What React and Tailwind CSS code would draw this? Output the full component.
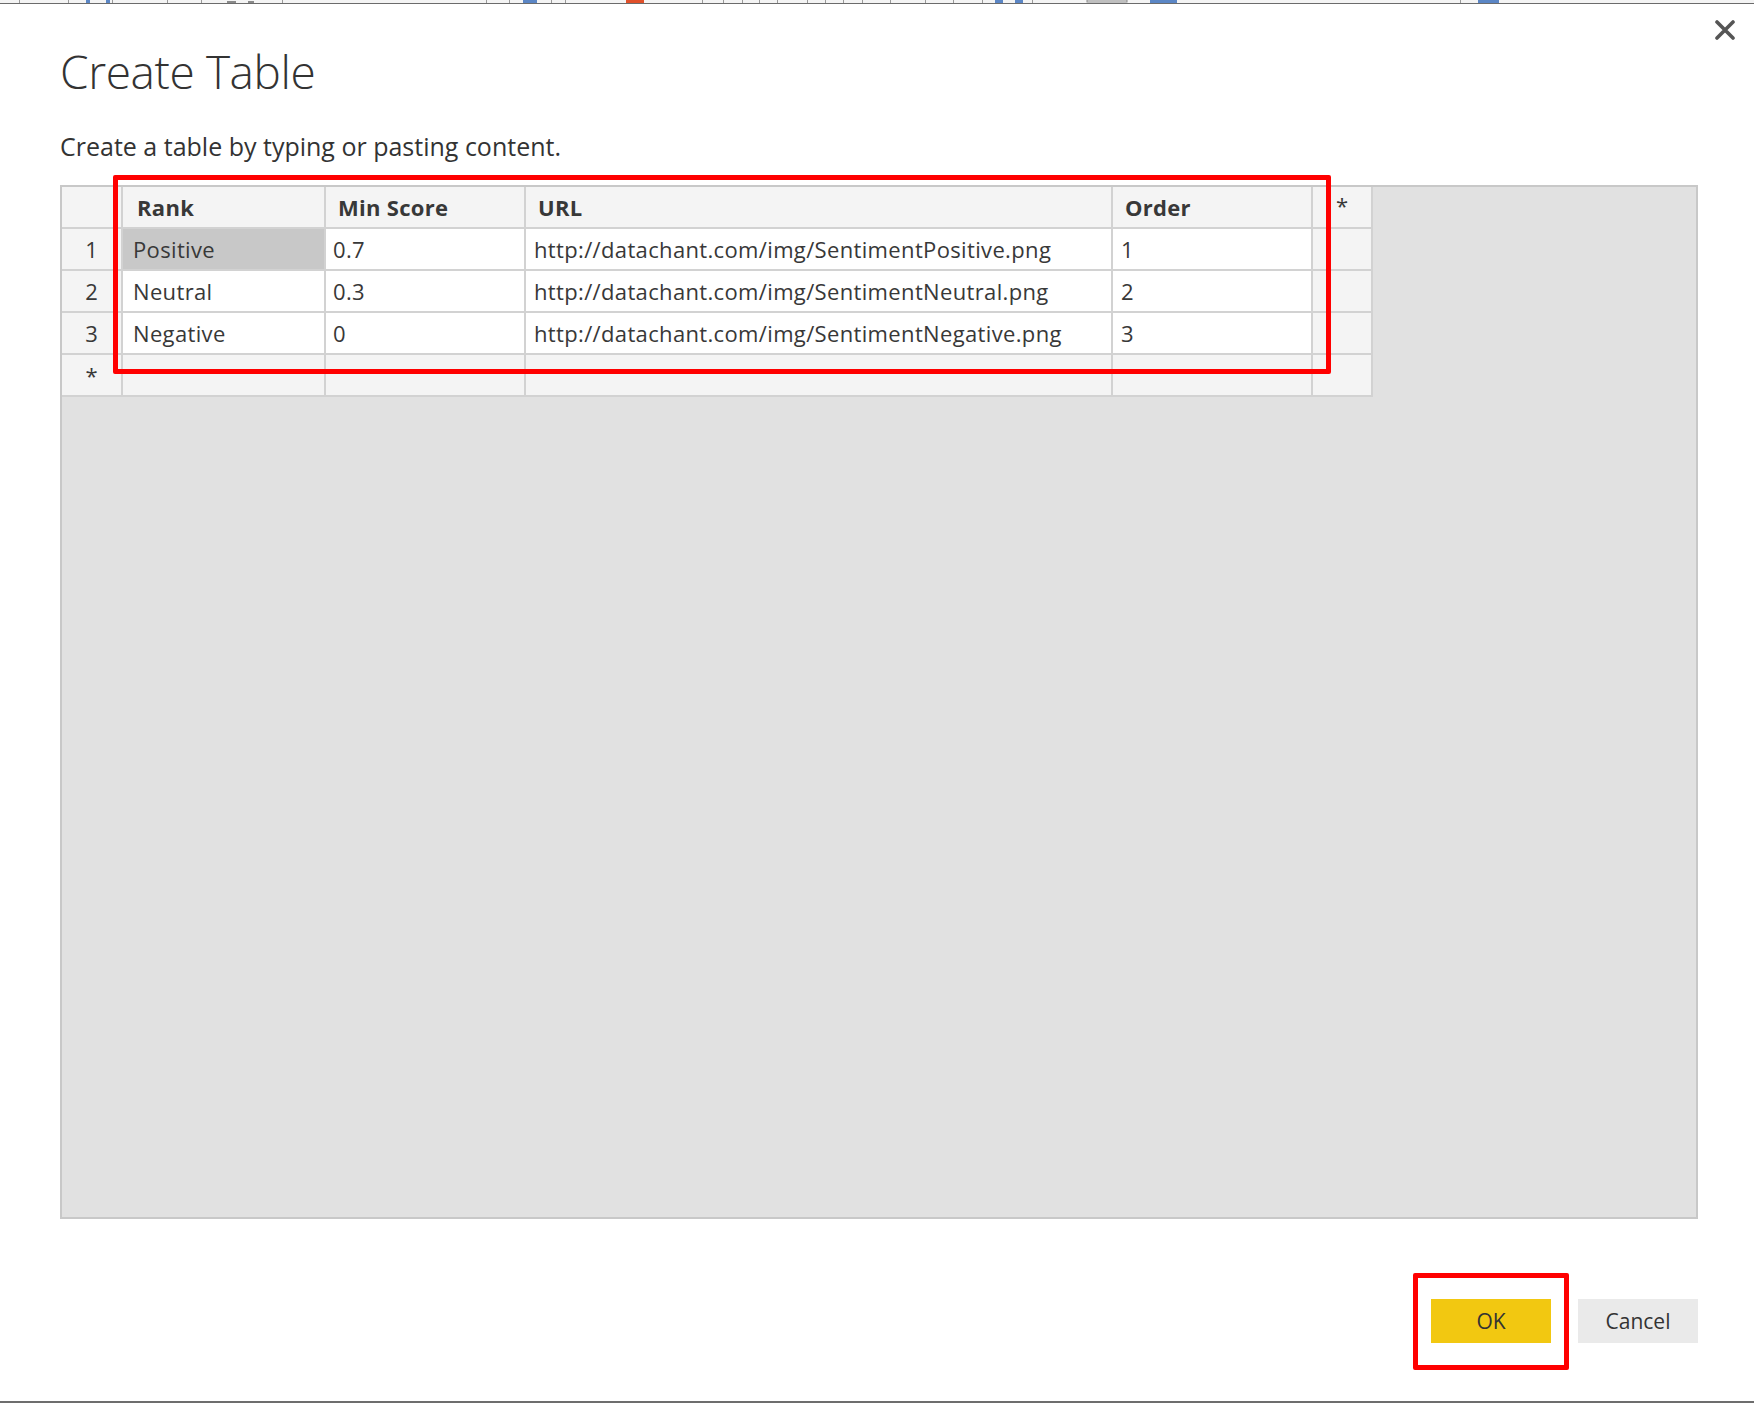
import React from 'react';

const COLS = [
  { key: 'rank', label: 'Rank', head: 'pl-[14px]', body: 'pl-[10px]' },
  { key: 'min', label: 'Min Score', head: 'pl-[12px]', body: 'pl-[7px]' },
  { key: 'url', label: 'URL', head: 'pl-[12px]', body: 'pl-[8px]' },
  { key: 'order', label: 'Order', head: 'pl-[12px]', body: 'pl-[8px]' },
];

const ROWS = [
  { rank: 'Positive', min: '0.7', url: 'http://datachant.com/img/SentimentPositive.png', order: '1' },
  { rank: 'Neutral', min: '0.3', url: 'http://datachant.com/img/SentimentNeutral.png', order: '2' },
  { rank: 'Negative', min: '0', url: 'http://datachant.com/img/SentimentNegative.png', order: '3' },
];

// cropped strip of the window toolbar above the dialog
const TopStrip = () => {
  const ticks = [19, 68, 112, 167, 201, 282, 486, 509, 551, 565, 702, 723, 742, 759, 777, 807, 825, 843, 862, 890, 925, 953, 982, 1032, 1460];
  const blue = [[86, 4], [106, 4], [523, 14], [995, 8], [1015, 8], [1150, 27], [1478, 21]];
  return (
    <svg width="1754" height="4" className="block shrink-0">
      <rect x="0" y="0" width="1754" height="3" fill="#f4f4f4" />
      {ticks.map((x) => (
        <rect key={x} x={x} y="0" width="1" height="3" fill="#9a9a9a" />
      ))}
      {blue.map(([x, w]) => (
        <rect key={x} x={x} y="0" width={w} height="3" fill="#5b86c5" />
      ))}
      <rect x="227" y="1" width="9" height="2" fill="#8a8a8a" />
      <rect x="248" y="1" width="6" height="2" fill="#8a8a8a" />
      <rect x="626" y="0" width="18" height="3" fill="#e0502a" />
      <rect x="1087" y="0" width="40" height="2" fill="none" stroke="#8a8a8a" strokeWidth="1" />
      <rect x="0" y="3" width="1754" height="1" fill="#6b6b6b" />
    </svg>
  );
};

const CloseIcon = () => (
  <svg width="20" height="20" viewBox="0 0 20 20" className="block">
    <path d="M2 2 L18 18 M18 2 L2 18" stroke="#555555" strokeWidth="3.6" strokeLinecap="round" />
  </svg>
);

const Cell = ({ className = '', children }) => (
  <div className={`flex items-center text-[22px] text-[#383838] leading-none whitespace-nowrap ${className}`}>{children}</div>
);

export default function App() {
  return (
    <div
      className="relative w-[1754px] h-[1403px] bg-white overflow-hidden flex flex-col"
      style={{ fontFamily: '"Open Sans", "Noto Sans", sans-serif' }}
    >
      <TopStrip />

      {/* Title row */}
      <div className="flex justify-between items-start pl-[60px] pr-[19px]">
        <h1 className="mt-[44px] text-[46px] leading-none font-light text-[#333333] tracking-[-0.4px]">Create Table</h1>
        <button className="mt-[16px]">
          <CloseIcon />
        </button>
      </div>

      <p className="pl-[60px] mt-[40px] text-[25px] leading-none text-[#333333]">
        Create a table by typing or pasting content.
      </p>

      {/* Grid area */}
      <div className="ml-[60px] mt-[26px] w-[1638px] h-[1034px] border-2 border-[#c8c8c8] bg-[#e1e1e1] shrink-0">
        <div className="grid w-fit grid-cols-[59px_201px_198px_585px_198px_58px] auto-rows-[40px] gap-[2px] pr-[2px] pb-[2px] bg-[#d2d2d2]">
          {/* header */}
          <Cell className="bg-[#f4f4f4]" />
          {COLS.map((c) => (
            <Cell key={c.key} className={`bg-[#f4f4f4] font-bold text-[#333333] tracking-[0.3px] ${c.head}`}>
              {c.label}
            </Cell>
          ))}
          <Cell className="bg-[#f4f4f4] justify-center text-[16px] pb-[4px]">*</Cell>

          {ROWS.map((r, i) => (
            <React.Fragment key={i}>
              <Cell className="bg-[#f4f4f4] justify-center">{i + 1}</Cell>
              {COLS.map((c) => (
                <Cell
                  key={c.key}
                  className={`${i === 0 && c.key === 'rank' ? 'bg-[#c8c8c8]' : 'bg-white'} tracking-[0.35px] ${c.body}`}
                >
                  {r[c.key]}
                </Cell>
              ))}
              <Cell className="bg-[#f4f4f4]" />
            </React.Fragment>
          ))}

          {/* new row */}
          <Cell className="bg-[#f4f4f4] justify-center text-[18px]">*</Cell>
          <Cell className="bg-[#f4f4f4]" />
          <Cell className="bg-[#f4f4f4]" />
          <Cell className="bg-[#f4f4f4]" />
          <Cell className="bg-[#f4f4f4]" />
          <Cell className="bg-[#f4f4f4]" />
        </div>
      </div>

      {/* Buttons */}
      <div className="flex justify-end gap-[27px] mt-[80px] pr-[56px]">
        <button className="w-[120px] h-[44px] bg-[#f2c811] text-[21px] text-[#333333] leading-none">OK</button>
        <button className="w-[120px] h-[44px] bg-[#eaeaea] text-[21px] text-[#333333] leading-none">Cancel</button>
      </div>

      <div className="mt-auto h-[2px] bg-[#6d6d6d]" />

      {/* red annotation boxes */}
      <div className="absolute left-[113px] top-[175px] w-[1218px] h-[199px] border-[5px] border-[#ff0000] rounded-[2px] pointer-events-none" />
      <div className="absolute left-[1413px] top-[1273px] w-[156px] h-[97px] border-[5px] border-[#ff0000] rounded-[2px] pointer-events-none" />
    </div>
  );
}
